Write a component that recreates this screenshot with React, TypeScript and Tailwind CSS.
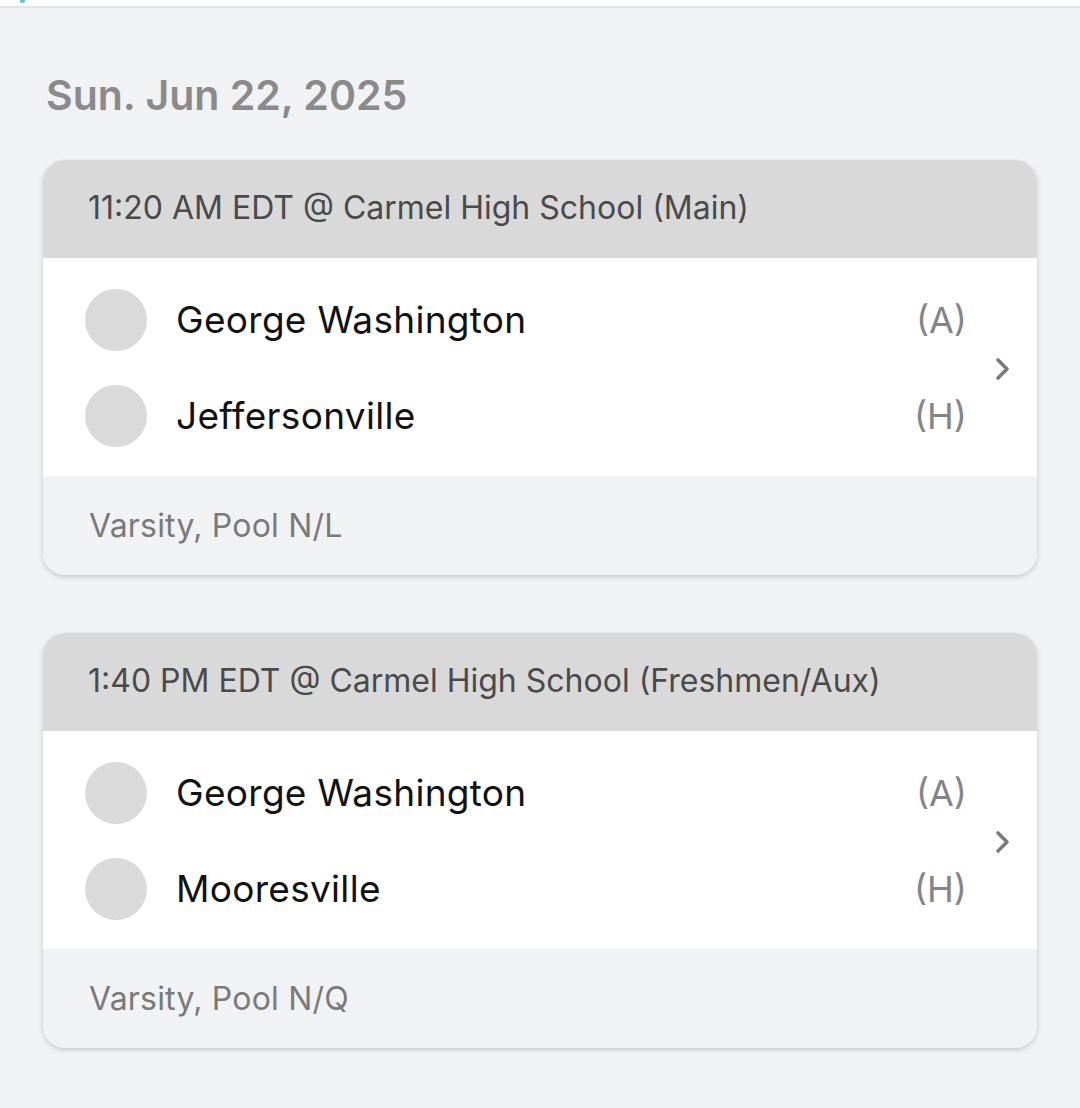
import React from "react";

const games = [
  {
    time: "11:20 AM EDT @ Carmel High School (Main)",
    teams: [
      { name: "George Washington", side: "(A)" },
      { name: "Jeffersonville", side: "(H)" },
    ],
    info: "Varsity, Pool N/L",
  },
  {
    time: "1:40 PM EDT @ Carmel High School (Freshmen/Aux)",
    teams: [
      { name: "George Washington", side: "(A)" },
      { name: "Mooresville", side: "(H)" },
    ],
    info: "Varsity, Pool N/Q",
  },
];

const Chevron = () => (
  <svg width="20" height="26" viewBox="0 0 20 26" fill="none">
    <path d="M5 4l9 9-9 9" stroke="#7b7b7b" strokeWidth="3.6" strokeLinecap="round" strokeLinejoin="round" />
  </svg>
);

const App = () => {
  return (
    <div
      className="min-h-[1108px] w-[1080px] bg-[#f1f2f4]"
      style={{ fontFamily: "Inter, 'Noto Sans', sans-serif" }}
    >
      <div className="relative h-[8px] border-b-2 border-[#e3e4e6] bg-white">
        <span className="absolute left-[20px] top-0 h-[3px] w-[5px] rounded-b-full bg-[#5cc6d6]" />
      </div>
      <div className="px-[43px] pt-[65px]">
        <h2 className="ml-[3px] text-[41px] font-semibold leading-[44px] text-[#8a8a8a]">
          Sun. Jun 22, 2025
        </h2>
        <div className="mt-[43px] flex flex-col gap-[58px]">
          {games.map((g) => (
            <section
              key={g.time}
              className="overflow-hidden rounded-[22px] bg-white shadow-[0_2px_5px_rgba(0,0,0,0.18)]"
            >
              <div className="flex h-[98px] items-center bg-[#d9d9d9] px-[45px] pb-[2px]">
                <span className="text-[32px] text-[#4a4a4a]">{g.time}</span>
              </div>
              <div className="flex items-center bg-white">
                <div className="flex flex-1 flex-col gap-[34px] pb-[29px] pl-[42px] pr-[26px] pt-[31px]">
                  {g.teams.map((t) => (
                    <div key={t.name} className="flex h-[62px] items-center">
                      <div className="h-[62px] w-[62px] rounded-full bg-[#dadada]" />
                      <span className="ml-[29px] flex-1 text-[37px] tracking-[0.3px] text-[#111]">
                        {t.name}
                      </span>
                      <span className="text-[36px] text-[#858585]">{t.side}</span>
                    </div>
                  ))}
                </div>
                <div className="pr-[24px] pt-[4px]">
                  <Chevron />
                </div>
              </div>
              <div className="flex h-[99px] items-center bg-[#f1f2f4] px-[46px]">
                <span className="text-[32px] tracking-[0.2px] text-[#7a7a7a]">{g.info}</span>
              </div>
            </section>
          ))}
        </div>
      </div>
    </div>
  );
};

export default App;
